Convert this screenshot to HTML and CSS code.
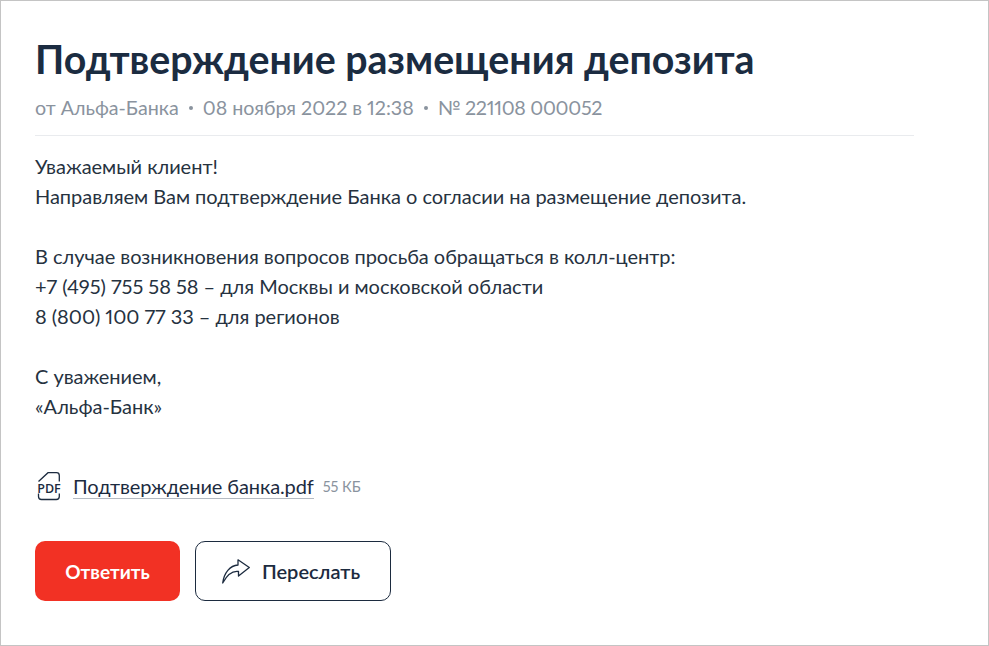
FILE: index.html
```html
<!DOCTYPE html>
<html lang="ru">
<head>
  <meta charset="UTF-8">
  <title>Подтверждение размещения депозита</title>
  <link rel="stylesheet" href="styles.css">
</head>
<body>
  <div class="letter">
    <h1>Подтверждение размещения депозита</h1>
    <div class="meta">
      <span>от Альфа-Банка</span>
      <span class="dot"></span>
      <span>08 ноября 2022 в 12:38</span>
      <span class="dot"></span>
      <span class="num">№ 221108 000052</span>
    </div>
    <div class="body">
      <p>Уважаемый клиент!<br>Направляем Вам подтверждение Банка о согласии на размещение депозита.</p>
      <p>В случае возникновения вопросов просьба обращаться в колл-центр:<br>+7 (495) 755 58 58 – для Москвы и московской области<br>8 (800) 100 77 33 – для регионов</p>
      <p>С уважением,<br>«Альфа-Банк»</p>
    </div>
    <div class="attach">
      <svg class="pdf-icon" width="27" height="30" viewBox="0 0 27 30" fill="none" stroke="#1c2b3f" stroke-width="1.3">
        <path d="M3.500 10.500L13 1.700H21.500Q24.300 1.700 24.300 4.500V10.500"/>
        <path d="M3.500 22.500V25.500Q3.500 28.500 6.500 28.500H21.300Q24.300 28.500 24.300 25.500V22.500"/>
        <text x="14" y="21.600" text-anchor="middle" stroke="none" fill="#1c2b3f">PDF</text>
      </svg>
      <a class="file" href="#1">Подтверждение банка.pdf</a>
      <span class="size">55 КБ</span>
    </div>
    <div class="actions">
      <button class="btn btn-red">Ответить</button>
      <button class="btn btn-line">
        <svg width="28" height="25" viewBox="0 0 28 25" fill="none" stroke="#1c2b3f" stroke-width="1.3" stroke-linejoin="round">
          <path d="M0.700 24C2 14 8 6.500 16 6V0.800L27.300 8.500L16.500 17V12.500C10 11.500 5 16 0.700 24Z"/>
        </svg>
        Переслать
      </button>
    </div>
  </div>
</body>
</html>
```

FILE: styles.css
```css
html, body {
  margin: 0;
  height: 100%;
}

body {
  font-family: Lato, "Open Sans", sans-serif;
  font-variant-numeric: proportional-nums;
  letter-spacing: -0.03px;
  color: #1c2b3f;
  background: #fff;
}

.letter {
  box-sizing: border-box;
  height: 646px;
  border: 1px solid #c4c4c4;
  padding: 35px 34px 0;
}

h1 {
  margin: 0;
  font-size: 39.300px;
  line-height: 46px;
  font-weight: 700;
  color: #1b2c41;
}

.meta {
  display: flex;
  align-items: center;
  gap: 10px;
  width: 879px;
  margin-top: 14px;
  padding-bottom: 15px;
  border-bottom: 1px solid #e9ebee;
  font-size: 19.700px;
  line-height: 24px;
  color: #8a939e;
}

.num {
  letter-spacing: -0.3px;
}

.dot {
  width: 4px;
  height: 4px;
  border-radius: 50%;
  background: #8a939e;
}

.body {
  margin-top: 15px;
  font-size: 20px;
  line-height: 30px;
  color: #26323f;
}

.body p {
  margin: 0 0 30px;
}

.attach {
  display: flex;
  align-items: center;
  margin-top: 50px;
}

.pdf-icon {
  margin-right: 11px;
}

.pdf-icon text {
  font-family: "Open Sans", sans-serif;
  font-size: 12.500px;
  font-weight: 600;
}

.file {
  font-size: 20px;
  line-height: 24px;
  letter-spacing: -0.1px;
  color: #1c2b3f;
  text-decoration: none;
  border-bottom: 1px solid #b4bac2;
}

.size {
  margin-left: 9px;
  font-size: 14.500px;
  color: #8a939e;
}

.actions {
  display: flex;
  gap: 15px;
  margin-top: 40px;
}

.btn {
  display: flex;
  align-items: center;
  justify-content: center;
  height: 60px;
  border-radius: 10px;
  font-family: Lato, sans-serif;
  font-size: 20px;
  font-weight: 600;
  cursor: pointer;
}

.btn-red {
  width: 145px;
  border: none;
  background: #f23124;
  color: #fff;
  font-size: 19px;
  font-weight: 700;
}

.btn-line {
  justify-content: flex-start;
  gap: 12px;
  width: 196px;
  padding: 0 0 0 26px;
  border: 1px solid #1c2b3f;
  background: #fff;
  color: #1c2b3f;
}
```
